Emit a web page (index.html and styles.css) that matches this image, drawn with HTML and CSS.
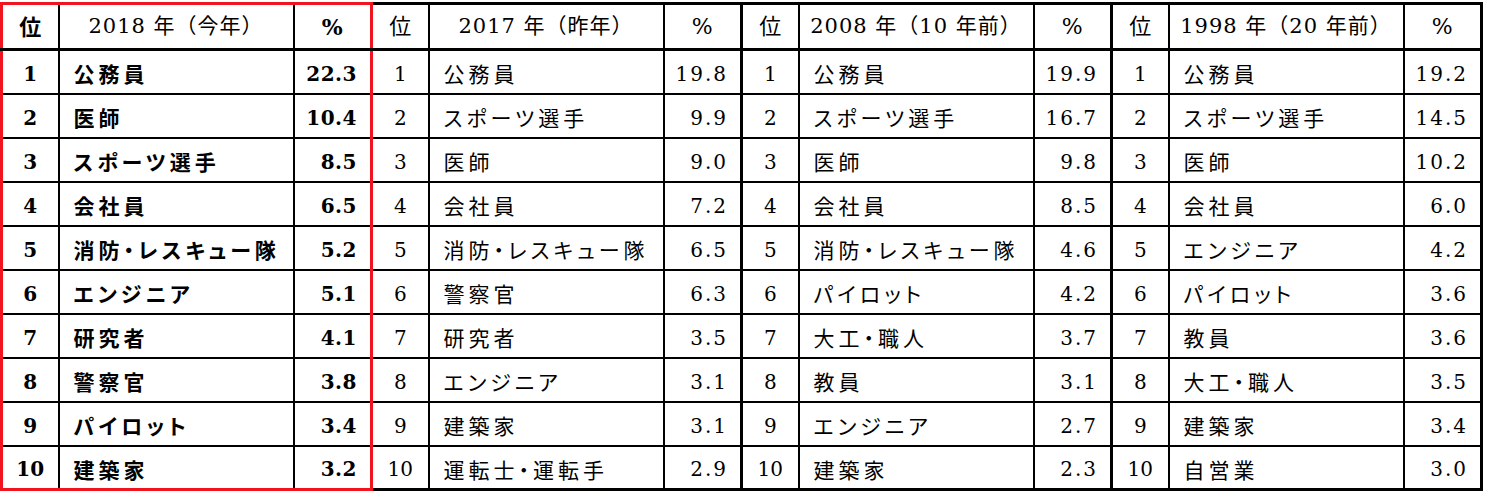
FILE: index.html
```html
<!DOCTYPE html>
<html lang="ja">
<head>
<meta charset="utf-8">
<title>なりたい職業ランキング</title>
<link rel="stylesheet" href="styles.css">
</head>
<body>
<div class="wrap">
<table class="rank">
<colgroup>
<col class="w-rk"><col class="w-nm"><col class="w-pc">
<col class="w-rk"><col class="w-nm"><col class="w-pc">
<col class="w-rk"><col class="w-nm"><col class="w-pc">
<col class="w-rk"><col class="w-nm"><col class="w-pc">
</colgroup>
<thead>
<tr>
<th class="g1 rk first">位</th><th class="g1 nm hd">2018 年（今年）</th><th class="g1 pc last">%</th>
<th class="rk gs">位</th><th class="nm hd">2017 年（昨年）</th><th class="pc">%</th>
<th class="rk gs">位</th><th class="nm hd">2008 年（10 年前）</th><th class="pc">%</th>
<th class="rk gs">位</th><th class="nm hd">1998 年（20 年前）</th><th class="pc end">%</th>
</tr>
</thead>
<tbody>
<tr>
<td class="g1 rk first">1</td><td class="g1 nm">公務員</td><td class="g1 pc last">22.3</td>
<td class="rk gs">1</td><td class="nm">公務員</td><td class="pc">19.8</td>
<td class="rk gs">1</td><td class="nm">公務員</td><td class="pc">19.9</td>
<td class="rk gs">1</td><td class="nm">公務員</td><td class="pc end">19.2</td>
</tr>
<tr>
<td class="g1 rk first">2</td><td class="g1 nm">医師</td><td class="g1 pc last">10.4</td>
<td class="rk gs">2</td><td class="nm">スポーツ選手</td><td class="pc">9.9</td>
<td class="rk gs">2</td><td class="nm">スポーツ選手</td><td class="pc">16.7</td>
<td class="rk gs">2</td><td class="nm">スポーツ選手</td><td class="pc end">14.5</td>
</tr>
<tr>
<td class="g1 rk first">3</td><td class="g1 nm">スポーツ選手</td><td class="g1 pc last">8.5</td>
<td class="rk gs">3</td><td class="nm">医師</td><td class="pc">9.0</td>
<td class="rk gs">3</td><td class="nm">医師</td><td class="pc">9.8</td>
<td class="rk gs">3</td><td class="nm">医師</td><td class="pc end">10.2</td>
</tr>
<tr>
<td class="g1 rk first">4</td><td class="g1 nm">会社員</td><td class="g1 pc last">6.5</td>
<td class="rk gs">4</td><td class="nm">会社員</td><td class="pc">7.2</td>
<td class="rk gs">4</td><td class="nm">会社員</td><td class="pc">8.5</td>
<td class="rk gs">4</td><td class="nm">会社員</td><td class="pc end">6.0</td>
</tr>
<tr>
<td class="g1 rk first">5</td><td class="g1 nm">消防・レスキュー隊</td><td class="g1 pc last">5.2</td>
<td class="rk gs">5</td><td class="nm">消防・レスキュー隊</td><td class="pc">6.5</td>
<td class="rk gs">5</td><td class="nm">消防・レスキュー隊</td><td class="pc">4.6</td>
<td class="rk gs">5</td><td class="nm">エンジニア</td><td class="pc end">4.2</td>
</tr>
<tr>
<td class="g1 rk first">6</td><td class="g1 nm">エンジニア</td><td class="g1 pc last">5.1</td>
<td class="rk gs">6</td><td class="nm">警察官</td><td class="pc">6.3</td>
<td class="rk gs">6</td><td class="nm">パイロット</td><td class="pc">4.2</td>
<td class="rk gs">6</td><td class="nm">パイロット</td><td class="pc end">3.6</td>
</tr>
<tr>
<td class="g1 rk first">7</td><td class="g1 nm">研究者</td><td class="g1 pc last">4.1</td>
<td class="rk gs">7</td><td class="nm">研究者</td><td class="pc">3.5</td>
<td class="rk gs">7</td><td class="nm">大工・職人</td><td class="pc">3.7</td>
<td class="rk gs">7</td><td class="nm">教員</td><td class="pc end">3.6</td>
</tr>
<tr>
<td class="g1 rk first">8</td><td class="g1 nm">警察官</td><td class="g1 pc last">3.8</td>
<td class="rk gs">8</td><td class="nm">エンジニア</td><td class="pc">3.1</td>
<td class="rk gs">8</td><td class="nm">教員</td><td class="pc">3.1</td>
<td class="rk gs">8</td><td class="nm">大工・職人</td><td class="pc end">3.5</td>
</tr>
<tr>
<td class="g1 rk first">9</td><td class="g1 nm">パイロット</td><td class="g1 pc last">3.4</td>
<td class="rk gs">9</td><td class="nm">建築家</td><td class="pc">3.1</td>
<td class="rk gs">9</td><td class="nm">エンジニア</td><td class="pc">2.7</td>
<td class="rk gs">9</td><td class="nm">建築家</td><td class="pc end">3.4</td>
</tr>
<tr class="bottom">
<td class="g1 rk first">10</td><td class="g1 nm">建築家</td><td class="g1 pc last">3.2</td>
<td class="rk gs">10</td><td class="nm">運転士・運転手</td><td class="pc">2.9</td>
<td class="rk gs">10</td><td class="nm">建築家</td><td class="pc">2.3</td>
<td class="rk gs">10</td><td class="nm">自営業</td><td class="pc end">3.0</td>
</tr>
</tbody>
</table>
</div>
</body>
</html>
```

FILE: styles.css
```css
html, body {
  margin: 0;
  padding: 0;
  background: #ffffff;
}

.wrap {
  padding-top: 2px;
}

.rank {
  border-collapse: collapse;
  table-layout: fixed;
  width: 1479px;
  color: #000;
  font-family: "DejaVu Serif", "Noto Sans CJK JP", serif;
  font-size: 20px;
}

.w-rk { width: 57px; }
.w-nm { width: 235px; }
.w-pc { width: 78px; }

.rank th,
.rank td {
  border: 2px solid #000;
  padding: 4px 0 0 0;
  white-space: nowrap;
  overflow: hidden;
  line-height: 1;
}

.rank thead tr { height: 46px; }
.rank tbody tr { height: 44px; }

.rank th {
  font-weight: 400;
  font-size: 22px;
  border-top: 3px solid #000;
  border-bottom: 3px solid #000;
  padding-top: 0;
}

.rk {
  text-align: center;
}

.nm {
  text-align: left;
  padding-left: 14px !important;
  font-family: "Noto Sans CJK JP", sans-serif;
  font-size: 21px;
  letter-spacing: 4px;
  font-feature-settings: "palt";
}

.rank .nm.hd {
  font-family: "DejaVu Serif", "Noto Sans CJK JP", serif;
  font-size: 21px;
  letter-spacing: 1px;
  text-align: center;
  padding-left: 0 !important;
  font-feature-settings: normal;
}

.pc {
  text-align: right;
  padding-right: 12px !important;
  letter-spacing: 2px;
}

.rank th.pc {
  text-align: center;
  padding-right: 0 !important;
  letter-spacing: 0;
}

.gs { border-left: 3px solid #000 !important; }
.end { border-right: 3px solid #000 !important; }
.rank tr.bottom td { border-bottom: 3px solid #000; }

/* 2018 group highlighted in red */
.rank .g1 { font-weight: 700; }
.rank .g1.nm.hd { font-weight: 400; }
.rank td.g1.pc {
  letter-spacing: 0.5px;
  padding-right: 13px !important;
}
.rank .first { border-left: 3px solid #f0141e; }
.rank .last { border-right: 3px solid #f0141e; }
.rank th.g1 { border-top: 3px solid #f0141e; }
.rank tr.bottom td.g1 { border-bottom: 3px solid #f0141e; }
```
